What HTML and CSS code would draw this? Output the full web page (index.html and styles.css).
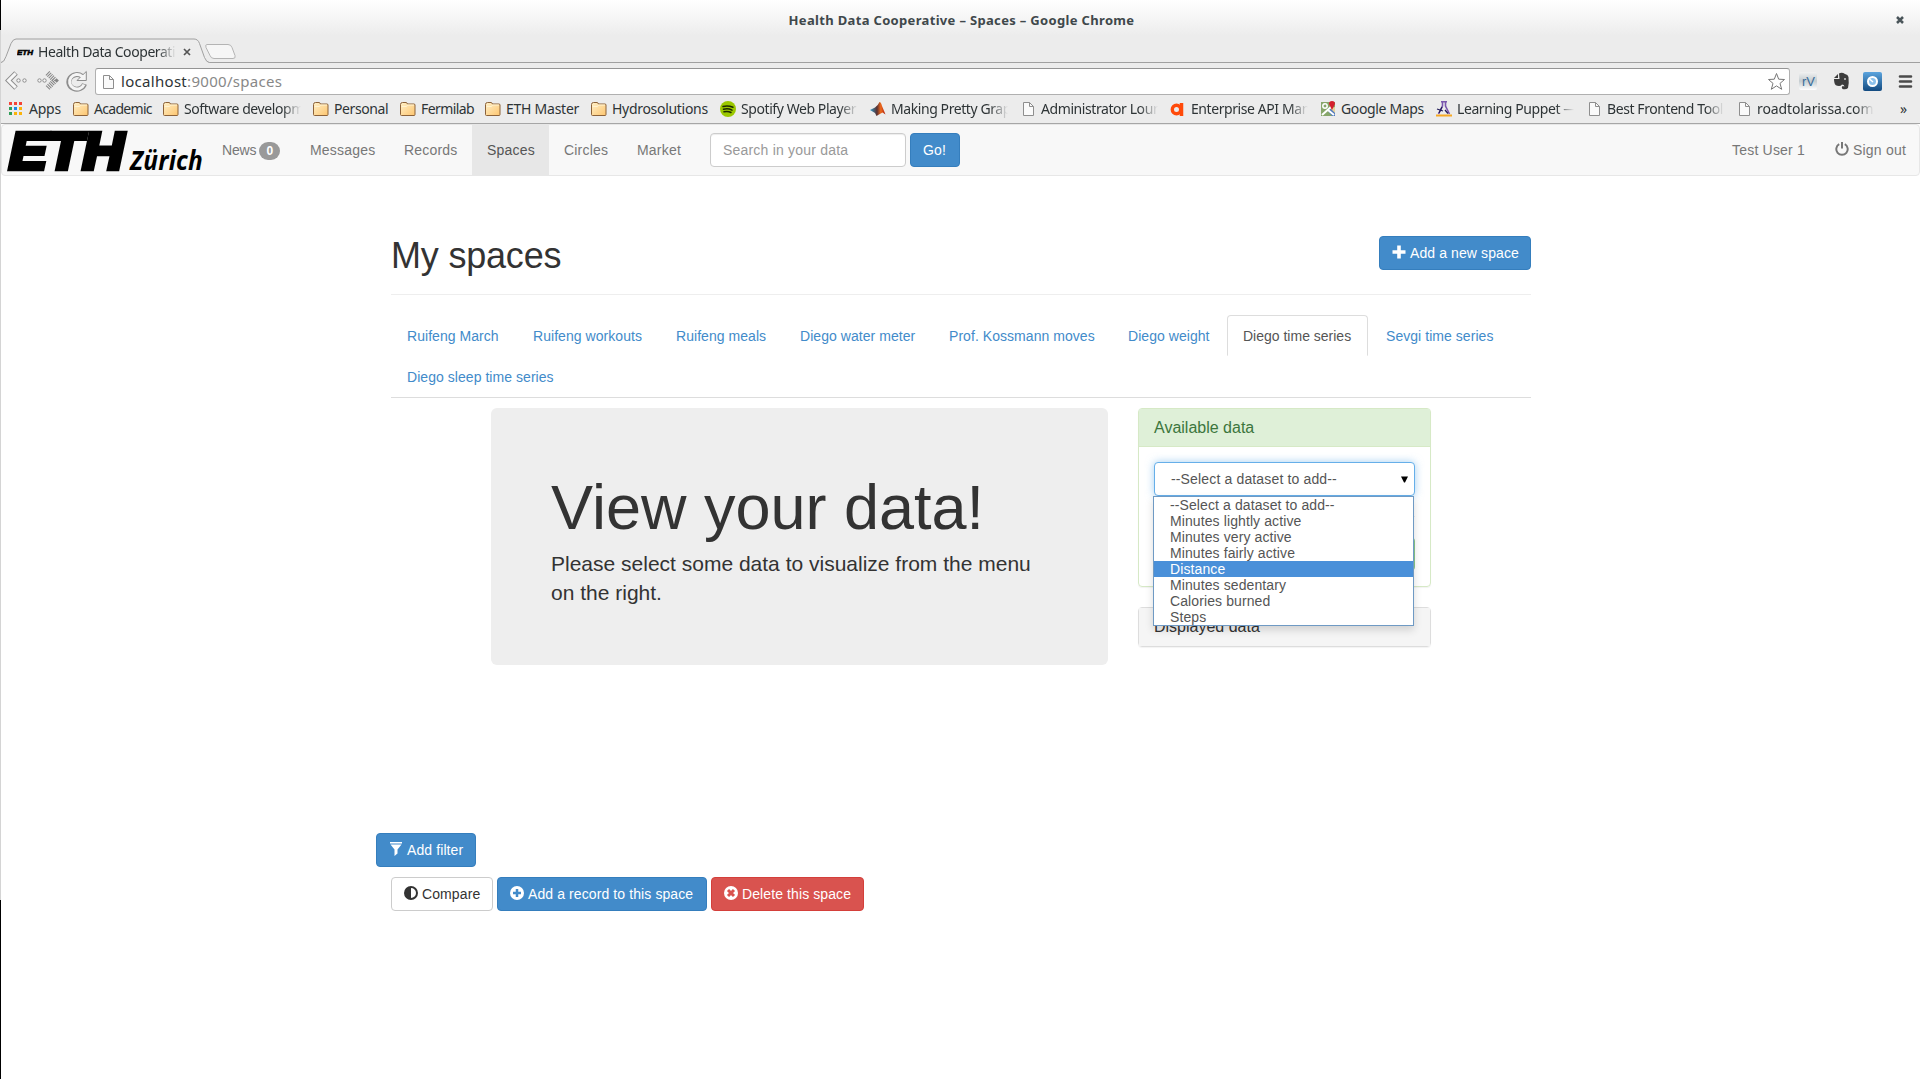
FILE: index.html
```html
<!DOCTYPE html>
<html lang="en">
<head>
<meta charset="utf-8">
<title>Health Data Cooperative – Spaces</title>
<link rel="stylesheet" href="styles.css">
</head>
<body>
<svg class="defs" width="0" height="0">
  <defs>
    <linearGradient id="fg" x1="0" y1="0" x2="1" y2="1"><stop offset="0" stop-color="#fff0c8"/><stop offset="1" stop-color="#fdc56f"/></linearGradient>
    <linearGradient id="mg" x1="0" y1="0" x2="1" y2="0"><stop offset="0" stop-color="#2c9ed0"/><stop offset=".45" stop-color="#5a3030"/><stop offset=".7" stop-color="#f06a1c"/><stop offset="1" stop-color="#a81c10"/></linearGradient>
    <linearGradient id="bg" x1="0" y1="0" x2="0" y2="1"><stop offset="0" stop-color="#5ba4de"/><stop offset="1" stop-color="#124a80"/></linearGradient>
    <linearGradient id="rg" x1="0" y1="0" x2="0" y2="1"><stop offset="0" stop-color="#f2f2f2"/><stop offset=".5" stop-color="#c4ccd0"/><stop offset="1" stop-color="#fff"/></linearGradient>
    <symbol id="folder" viewBox="0 0 16 16"><path d="M1.5 14.5q-1 0-1-1v-10q0-2 2-2h3.500q1 0 1.500 1.500h6.500q1 0 1 1v9.500q0 1-1 1z" fill="url(#fg)" stroke="#8c6239"/><path d="M1.500 5.500h5l1-1.500h6.500" fill="none" stroke="#fff3d2"/></symbol>
    <symbol id="doc" viewBox="0 0 16 16"><path d="M3.500 1.500h6l4 4v9h-10z" fill="#fafafa" stroke="#8e8e8e"/><path d="M9.500 1.500v4h4" fill="none" stroke="#8e8e8e"/></symbol>
  </defs>
</svg>
<div class="window">
  <header class="chrome">
    <div class="titlebar"><span class="wintitle">Health Data Cooperative – Spaces – Google Chrome</span>
      <svg class="winclose" width="8" height="8" viewBox="0 0 8 8"><path d="M1 1l6 6M7 1l-6 6" stroke="#4a555a" stroke-width="2.500"/></svg>
    </div>
    <div class="tabstrip">
      <svg class="tabshape" width="240" height="26" viewBox="0 0 240 26">
        <path d="M0 24.500q3 0 5-6l5-13q2-4.500 5-4.500h178q4 0 5.500 4.500l5 14q2 5 5 5h32v2h-240z" fill="#ededed"/>
        <path d="M0 24.500q3 0 5-6l5-13q2-4.500 5-4.500h178q4 0 5.500 4.500l5 14q2 5 5 5h32" fill="none" stroke="#a0a0a0"/>
        <path d="M206 6.500h21q3 0 4 3l3 8q1 3-2 3h-19q-3 0-4-3l-4-8q-1-3 1-3z" fill="#f6f6f6" stroke="#b4b4b4"/>
      </svg>
      <div class="tab">
        <svg width="17" height="16" viewBox="0 0 17 16"><text x="0" y="11" class="fav" textLength="16" lengthAdjust="spacingAndGlyphs">ETH</text></svg>
        <span class="tabtitle">Health Data Cooperati</span>
        <svg width="8" height="8" viewBox="0 0 8 8"><path d="M1 1l6 6M7 1l-6 6" stroke="#555" stroke-width="1.700"/></svg>
      </div>
    </div>
    <div class="toolbar">
      <svg class="navicons" width="86" height="22" viewBox="0 0 86 22">
        <path d="M11 3l-7.500 7.500 7.500 7.500" fill="none" stroke="#8d8d8d" stroke-width="5"/>
        <path d="M10.600 3.400l-7.100 7.100 7.100 7.100" fill="none" stroke="#f7f7f7" stroke-width="3"/>
        <path d="M44 3l7.500 7.500-7.500 7.500" fill="none" stroke="#858585" stroke-width="5.500" stroke-dasharray="1 1" transform="translate(-1.500 0)"/>
        <g fill="#f7f7f7" stroke="#8d8d8d">
          <circle cx="13.500" cy="10.500" r="1.700"/><circle cx="19.500" cy="10.500" r="1.700"/>
          <circle cx="34.500" cy="10.500" r="1.700"/><circle cx="39.500" cy="10.500" r="1.700"/>
        </g>
        <g transform="translate(-2.500 0)">
          <path d="M82 14a8 7.300 0 1 1-2.500-7.700" fill="none" stroke="#8d8d8d" stroke-width="5"/>
          <path d="M83.800 1.500v9h-9.300l3.500-3.500z" fill="#f4f4f4" stroke="#8d8d8d"/>
          <path d="M81.500 14.500a7.500 7.300 0 1 1-2-8.200l2 1" fill="none" stroke="#f4f4f4" stroke-width="3"/>
        </g>
      </svg>
      <div class="omnibox"><svg width="16" height="16"><use href="#doc"/></svg><span class="url">localhost<i>:9000/spaces</i></span>
        <svg class="star" width="19" height="19" viewBox="0 0 19 19"><path d="M9.500 1.500l2.200 5.700 5.800.3-4.500 3.900 1.700 5.900-5.200-3.400-5.200 3.400 1.700-5.900-4.500-3.900 5.800-.3z" fill="#fff" stroke="#777" stroke-linejoin="round"/></svg>
      </div>
      <svg class="exts" width="116" height="20" viewBox="0 0 116 20">
        <rect x="1" y="1" width="18" height="18" rx="2" fill="url(#rg)"/><text x="4" y="15" class="rv" textLength="13" lengthAdjust="spacingAndGlyphs">rV</text>
        <path d="M36 7l4-4v4zM41 2.500q3-1.500 6 .5 3 .5 3.500 3 .7 6-.5 11-2 2-5.500 1-1.500-1.500 0-3l2 .5q-.5-2-2.500-2-1 1.500-3 1.500-4 0-4.500-3-.5-2-.5-4h5.500z" fill="#3c3c3c"/><circle cx="47" cy="8" r="1" fill="#ccc"/>
        <rect x="65" y="1" width="19" height="19" rx="2" fill="url(#bg)"/><circle cx="74.500" cy="10.500" r="4.500" fill="#8bc1ec" stroke="#fff" stroke-width="2"/><path d="M71.500 8l3.500 3" stroke="#fff" stroke-width="1.500"/>
        <path d="M102 5.500h11M102 10.500h11M102 15.500h11" stroke="#4a4a4a" stroke-width="2.600" stroke-linecap="round"/>
      </svg>
    </div>
    <nav class="bookmarks">
      <a class="bm w-apps"><svg width="16" height="16" viewBox="0 0 16 16"><path d="M1 1h3v3h-3zM6 1h3v3h-3zM11 1h3v3h-3z" fill="#f44336"/><path d="M1 6h3v3h-3zM1 11h3v3h-3z" fill="#2f9e58"/><path d="M6 6h3v3h-3z" fill="#1e88e5"/><path d="M11 6h3v3h-3zM6 11h3v3h-3zM11 11h3v3h-3z" fill="#fbb30a"/></svg><span>Apps</span></a>
      <a class="bm w-aca"><svg width="16" height="16"><use href="#folder"/></svg><span>Academic</span></a>
      <a class="bm"><svg width="16" height="16"><use href="#folder"/></svg><span class="fade">Software developm</span></a>
      <a class="bm w-per"><svg width="16" height="16"><use href="#folder"/></svg><span>Personal</span></a>
      <a class="bm w-fer"><svg width="16" height="16"><use href="#folder"/></svg><span>Fermilab</span></a>
      <a class="bm w-eth"><svg width="16" height="16"><use href="#folder"/></svg><span>ETH Master</span></a>
      <a class="bm w-hyd"><svg width="16" height="16"><use href="#folder"/></svg><span>Hydrosolutions</span></a>
      <a class="bm"><svg width="16" height="16" viewBox="0 0 16 16"><circle cx="8" cy="8" r="8" fill="#9bc800"/><path d="M3 5.500q5-1.500 10 .8M3.500 8.300q4.500-1.300 8.500.8M4 10.800q4-1 7 .7" fill="none" stroke="#1d2a00" stroke-width="1.500" stroke-linecap="round"/></svg><span class="fade">Spotify Web Player</span></a>
      <a class="bm"><svg width="16" height="16" viewBox="0 0 16 16"><path d="M0 9l5-2.500q3-2 4.500-5.500 1.500 0 2.500 4l3.500 8.500-3-2-3.500 2-2.500 1.500-1.500-3z" fill="url(#mg)"/></svg><span class="fade">Making Pretty Grap</span></a>
      <a class="bm"><svg width="16" height="16"><use href="#doc"/></svg><span class="fade">Administrator Loun</span></a>
      <a class="bm"><svg width="16" height="16" viewBox="0 0 16 16"><circle cx="6.500" cy="8.500" r="4.200" fill="none" stroke="#ff4a0a" stroke-width="3.400"/><path d="M11.500 2v13" stroke="#ff4a0a" stroke-width="3.500"/></svg><span class="fade">Enterprise API Man</span></a>
      <a class="bm w-map"><svg width="16" height="16" viewBox="0 0 16 16"><path d="M1 1h14v14h-14z" fill="#87a66a"/><path d="M7 9l8-2v8h-3z" fill="#4f7ac0"/><path d="M10 7l5-1v6z" fill="#e6d39b"/><path d="M2 14l10-9M8 9l6 5" stroke="#fff" stroke-width="2"/><circle cx="5" cy="5" r="2.200" fill="none" stroke="#fff" stroke-width="1.500"/><path d="M12 9l-3-6q0-3 3-3t3 3z" fill="#d3202c"/></svg><span>Google Maps</span></a>
      <a class="bm"><svg width="16" height="16" viewBox="0 0 16 16"><path d="M5 .8h6M6.500 1v4l-4 8M9.500 1v4l4 8" fill="none" stroke="#7b57ae" stroke-width="1.600"/><path d="M0 13.500h16v2h-16z" fill="#f7a823"/><path d="M1 8l6 2M6 6l-3 6M9 9l3 3.500" stroke="#211c59" stroke-width="1.300" fill="none"/></svg><span class="fade">Learning Puppet —</span></a>
      <a class="bm"><svg width="16" height="16"><use href="#doc"/></svg><span class="fade">Best Frontend Tool</span></a>
      <a class="bm"><svg width="16" height="16"><use href="#doc"/></svg><span class="fade road">roadtolarissa.com/r</span></a>
      <span class="more">»</span>
    </nav>
  </header>

  <nav class="navbar">
    <a class="brand"><svg width="206" height="50" viewBox="0 0 206 50">
      <text class="eth" x="9" y="43.500" textLength="115" lengthAdjust="spacingAndGlyphs">ETH</text>
      <text class="zurich" x="130" y="45" textLength="73" lengthAdjust="spacingAndGlyphs">Zürich</text>
    </svg></a>
    <ul class="links">
      <li class="n1">News<span class="badge">0</span></li><li class="n2">Messages</li><li class="n3">Records</li><li class="n4 active">Spaces</li><li class="n5">Circles</li><li class="n5">Market</li>
    </ul>
    <div class="search"><span class="input">Search in your data</span><span class="btn primary go">Go!</span></div>
    <ul class="links right"><li class="user">Test User 1</li><li class="out"><svg width="14" height="14" viewBox="0 0 14 14"><path d="M4.200 2.200a5.700 5.700 0 1 0 5.600 0" fill="none" stroke="#777" stroke-width="2"/><path d="M7 0v6.500" stroke="#777" stroke-width="2"/></svg>Sign out</li></ul>
  </nav>

  <main class="container">
    <div class="pagehead"><h1>My spaces</h1><a class="btn primary b-new"><svg width="14" height="14" viewBox="0 0 14 14"><path d="M7 .5v13M.5 7h13" stroke="#fff" stroke-width="3.600"/></svg>Add a new space</a></div>
    <ul class="tabs">
      <li class="t1">Ruifeng March</li><li class="t2">Ruifeng workouts</li><li class="t3">Ruifeng meals</li><li class="t4">Diego water meter</li><li class="t5">Prof. Kossmann moves</li><li class="t6">Diego weight</li><li class="t7 current">Diego time series</li><li>Sevgi time series</li><li>Diego sleep time series</li>
    </ul>
    <div class="content">
      <section class="jumbo"><h2>View your data!</h2><p>Please select some data to visualize from the menu on the right.</p></section>
      <aside class="side">
        <div class="panel green"><div class="phead">Available data</div>
          <div class="pbody">
            <div class="select"><span>--Select a dataset to add--</span><svg width="7" height="7" viewBox="0 0 7 7"><path d="M0 .5h7l-3 6h-1z" fill="#000"/></svg>
              <ul class="options"><li>--Select a dataset to add--</li><li>Minutes lightly active</li><li>Minutes very active</li><li>Minutes fairly active</li><li class="hover">Distance</li><li>Minutes sedentary</li><li>Calories burned</li><li>Steps</li></ul>
            </div>
            <hr><div class="addbtn"></div>
          </div>
        </div>
        <div class="panel grey"><div class="phead">Displayed data</div></div>
      </aside>
    </div>
    <div class="filterrow"><a class="btn primary b-filter"><svg width="14" height="14" viewBox="0 0 14 14"><path d="M1 0h12v1.500h-12zM1.500 2.500h11l-4 5v4l-3 2.500v-6.500z" fill="#fff"/></svg>Add filter</a></div>
    <div class="actions">
      <a class="btn plain b-cmp"><svg width="14" height="14" viewBox="0 0 14 14"><circle cx="7" cy="7" r="6" fill="#fff" stroke="#333" stroke-width="2"/><path d="M7 1a6 6 0 0 0 0 12z" fill="#333"/></svg>Compare</a>
      <a class="btn primary b-rec"><svg width="14" height="14" viewBox="0 0 14 14"><circle cx="7" cy="7" r="7" fill="#fff"/><path d="M7 3v8M3 7h8" stroke="#428bca" stroke-width="2.500"/></svg>Add a record to this space</a>
      <a class="btn danger b-del"><svg width="14" height="14" viewBox="0 0 14 14"><circle cx="7" cy="7" r="7" fill="#fff"/><path d="M4 4l6 6M10 4l-6 6" stroke="#d9534f" stroke-width="3"/></svg>Delete this space</a>
    </div>
  </main>
</div>
</body>
</html>
```
FILE: styles.css
```css
* { box-sizing: border-box; }
body { margin: 0; height: 1079px; overflow: hidden; background: linear-gradient(#000 0 30px, #d4d4d4 30px 900px, #000 900px); font: 14px/20px "Liberation Sans", Arial, sans-serif; color: #333; }
ul { list-style: none; margin: 0; padding: 0; }
.defs { position: absolute; }
.window { margin-left: 1px; height: 1079px; background: #fff; }

.chrome { height: 124px; background: linear-gradient(#fff, #ececec 36px); border-bottom: 1px solid #a6a6a6; font-family: "Noto Sans", "Open Sans", sans-serif; color: #2e3436; }
.titlebar { height: 38px; display: flex; align-items: center; padding: 2px 16px 0 0; }
.wintitle { flex: 1; padding-left: 26px; text-align: center; font-size: 13px; font-weight: bold; letter-spacing: .33px; color: #3f484b; }
.tabstrip { height: 26px; display: grid; background: linear-gradient(#a0a0a0, #a0a0a0) 0 24px / 100% 1px no-repeat; }
.tabshape, .tab { grid-area: 1 / 1; }
.tab { display: flex; align-items: center; padding: 1px 0 0 16px; width: 200px; font-size: 14px; }
.tabtitle { width: 138px; margin: 0 7px 0 4px; letter-spacing: -.42px; }
.tabtitle, .fade { overflow: hidden; white-space: nowrap; -webkit-mask-image: linear-gradient(to left, transparent, #000 18px); mask-image: linear-gradient(to left, transparent, #000 18px); }
.fav { font: italic bold 8px "Liberation Sans", sans-serif; stroke: #000; stroke-width: .6; }
.toolbar { height: 32px; display: flex; padding-top: 4px; }
.navicons { margin: 2px 4px 0; flex: none; }
.omnibox { width: 1695px; height: 27px; border: 1px solid #b0b0b0; border-top-color: #949494; border-radius: 3px; background: #fff; display: flex; align-items: center; padding-left: 4px; font-size: 15px; }
.url { flex: 1; margin: -2px 0 0 5px; letter-spacing: .3px; }
.url i { font-style: normal; color: #888; }
.star { margin-right: 3px; }
.exts { margin: 3px 0 0 8px; }
.rv { font: 13px "Liberation Sans", sans-serif; fill: #386c99; }
.bookmarks { height: 26px; display: flex; gap: 12px; padding-left: 7px; align-items: center; font-size: 14px; }
.bm { display: flex; gap: 5px; width: 138px; align-items: center; flex: none; white-space: nowrap; letter-spacing: -.25px; }
.bm svg { flex: none; }
.bm span { margin-top: -1px; }
.fade { width: 117px; letter-spacing: -.42px; }
.road { letter-spacing: -.1px; }
.w-apps { width: 53px; } .w-aca { width: 78px; letter-spacing: -.7px; } .w-per { width: 75px; letter-spacing: -.4px; } .w-fer { width: 73px; letter-spacing: -.6px; }
.w-eth { width: 94px; } .w-hyd { width: 117px; letter-spacing: -.3px; } .w-map { width: 104px; letter-spacing: -.35px; }
.more { margin-left: 14px; }

.navbar { height: 52px; border: 1px solid #e7e7e7; border-radius: 4px; background: #f8f8f8; display: flex; color: #777; letter-spacing: .2px; }
.brand { width: 205px; height: 50px; }
.brand svg { margin-left: -2px; }
.eth { font: italic bold 52px "Liberation Sans", sans-serif; stroke: #000; stroke-width: 4.500; }
.zurich { font: italic bold 26px "Open Sans", "Noto Sans", sans-serif; }
.links { display: flex; }
.links li { padding: 15px 0 15px 15px; white-space: nowrap; }
.n1 { width: 88px; letter-spacing: -.2px; } .n2 { width: 94px; } .n3 { width: 83px; } .n4 { width: 77px; } .n5 { width: 73px; }
.links .active { background: #e7e7e7; color: #555; }
.badge { display: inline-block; margin-left: 3px; width: 21px; height: 18px; border-radius: 9px; background: #999; color: #fff; font: bold 12px/18px "Liberation Sans", sans-serif; text-align: center; }
.search { display: flex; gap: 4px; padding: 8px 0 0 15px; }
.input { width: 196px; height: 34px; border: 1px solid #ccc; border-radius: 4px; background: #fff; padding: 6px 12px; color: #999; box-shadow: inset 0 1px 1px rgba(0,0,0,.075); }
.right { margin-left: auto; }
.user { width: 103px; }
.out { width: 99px; }
.out svg { margin-right: 4px; vertical-align: -1px; }

.btn { display: inline-block; height: 34px; padding: 6px 0 6px 12px; border: 1px solid; border-radius: 4px; white-space: nowrap; color: #fff; letter-spacing: .1px; }
.btn svg { margin-right: 4px; vertical-align: -1px; }
.primary { background: #428bca; border-color: #357ebd; }
.danger { background: #d9534f; border-color: #d43f3a; }
.plain { background: #fff; border-color: #ccc; color: #333; }
.go { width: 50px; }
.b-new { width: 152px; }
.b-filter { width: 100px; }
.b-cmp { width: 102px; }
.b-rec { width: 210px; }
.b-del { width: 153px; }

.container { width: 1140px; margin-left: 390px; padding-top: 60px; }
.pagehead { display: flex; justify-content: space-between; height: 59px; border-bottom: 1px solid #eee; }
h1 { margin: 0; font: 36px/40px "Liberation Sans", sans-serif; letter-spacing: -.2px; }
.tabs { display: flex; flex-wrap: wrap; align-content: flex-start; margin-top: 20px; height: 83px; border-bottom: 1px solid #ddd; color: #428bca; }
.tabs li { height: 41px; padding: 10px 0 10px 15px; margin-right: 2px; border: 1px solid transparent; border-radius: 4px 4px 0 0; letter-spacing: .05px; white-space: nowrap; }
.tabs li:nth-child(8) { width: 141px; }
.t1 { width: 124px; } .t2 { width: 141px; } .t3 { width: 122px; } .t4 { width: 147px; }
.t5 { width: 177px; } .t6 { width: 113px; } .t7 { width: 141px; }
.tabs .current { border-color: #ddd #ddd transparent; color: #555; letter-spacing: 0; }
.content { display: flex; gap: 30px; margin: 10px 0 0 100px; align-items: flex-start; }
.jumbo { width: 617px; height: 257px; padding: 68px 60px 0; border-radius: 6px; background: #eee; }
h2 { margin: 0 0 10px; font: 63px/63px "Liberation Sans", sans-serif; }
.jumbo p { margin: 0; font-size: 21px; line-height: 29.400px; }
.side { width: 293px; }
.panel { border: 1px solid #ddd; border-radius: 4px; box-shadow: 0 1px 1px rgba(0,0,0,.05); margin-bottom: 20px; }
.phead { height: 38px; padding: 10px 15px; font-size: 16px; line-height: 18px; background: #f5f5f5; }
.green { border-color: #d6e9c6; }
.green .phead { background: #dff0d8; color: #3c763d; border-bottom: 1px solid #d6e9c6; }
.pbody { padding: 15px; }
.select { position: relative; height: 34px; border: 1px solid #66afe9; border-radius: 4px; box-shadow: 0 0 8px rgba(102,175,233,.6); padding: 0 6px 0 16px; display: flex; justify-content: space-between; align-items: center; color: #555; letter-spacing: .15px; background: #fff; }
.options { position: absolute; z-index: 2; left: -2px; top: 33px; width: 261px; border: 1px solid #6f9ac4; background: #fff; box-shadow: 0 4px 8px rgba(0,0,0,.15); letter-spacing: .1px; }
.options li { height: 16px; line-height: 17px; padding-left: 16px; }
.options .hover { background: #4a90d9; color: #fff; }
hr { margin: 20px 0; border: 0; border-top: 1px solid #eee; }
.addbtn { height: 34px; border: 1px solid #4cae4c; border-radius: 4px; background: #5cb85c; opacity: .65; }
.filterrow { margin: 166px 0 10px -15px; height: 34px; }
.actions { display: flex; gap: 4px; }
```
